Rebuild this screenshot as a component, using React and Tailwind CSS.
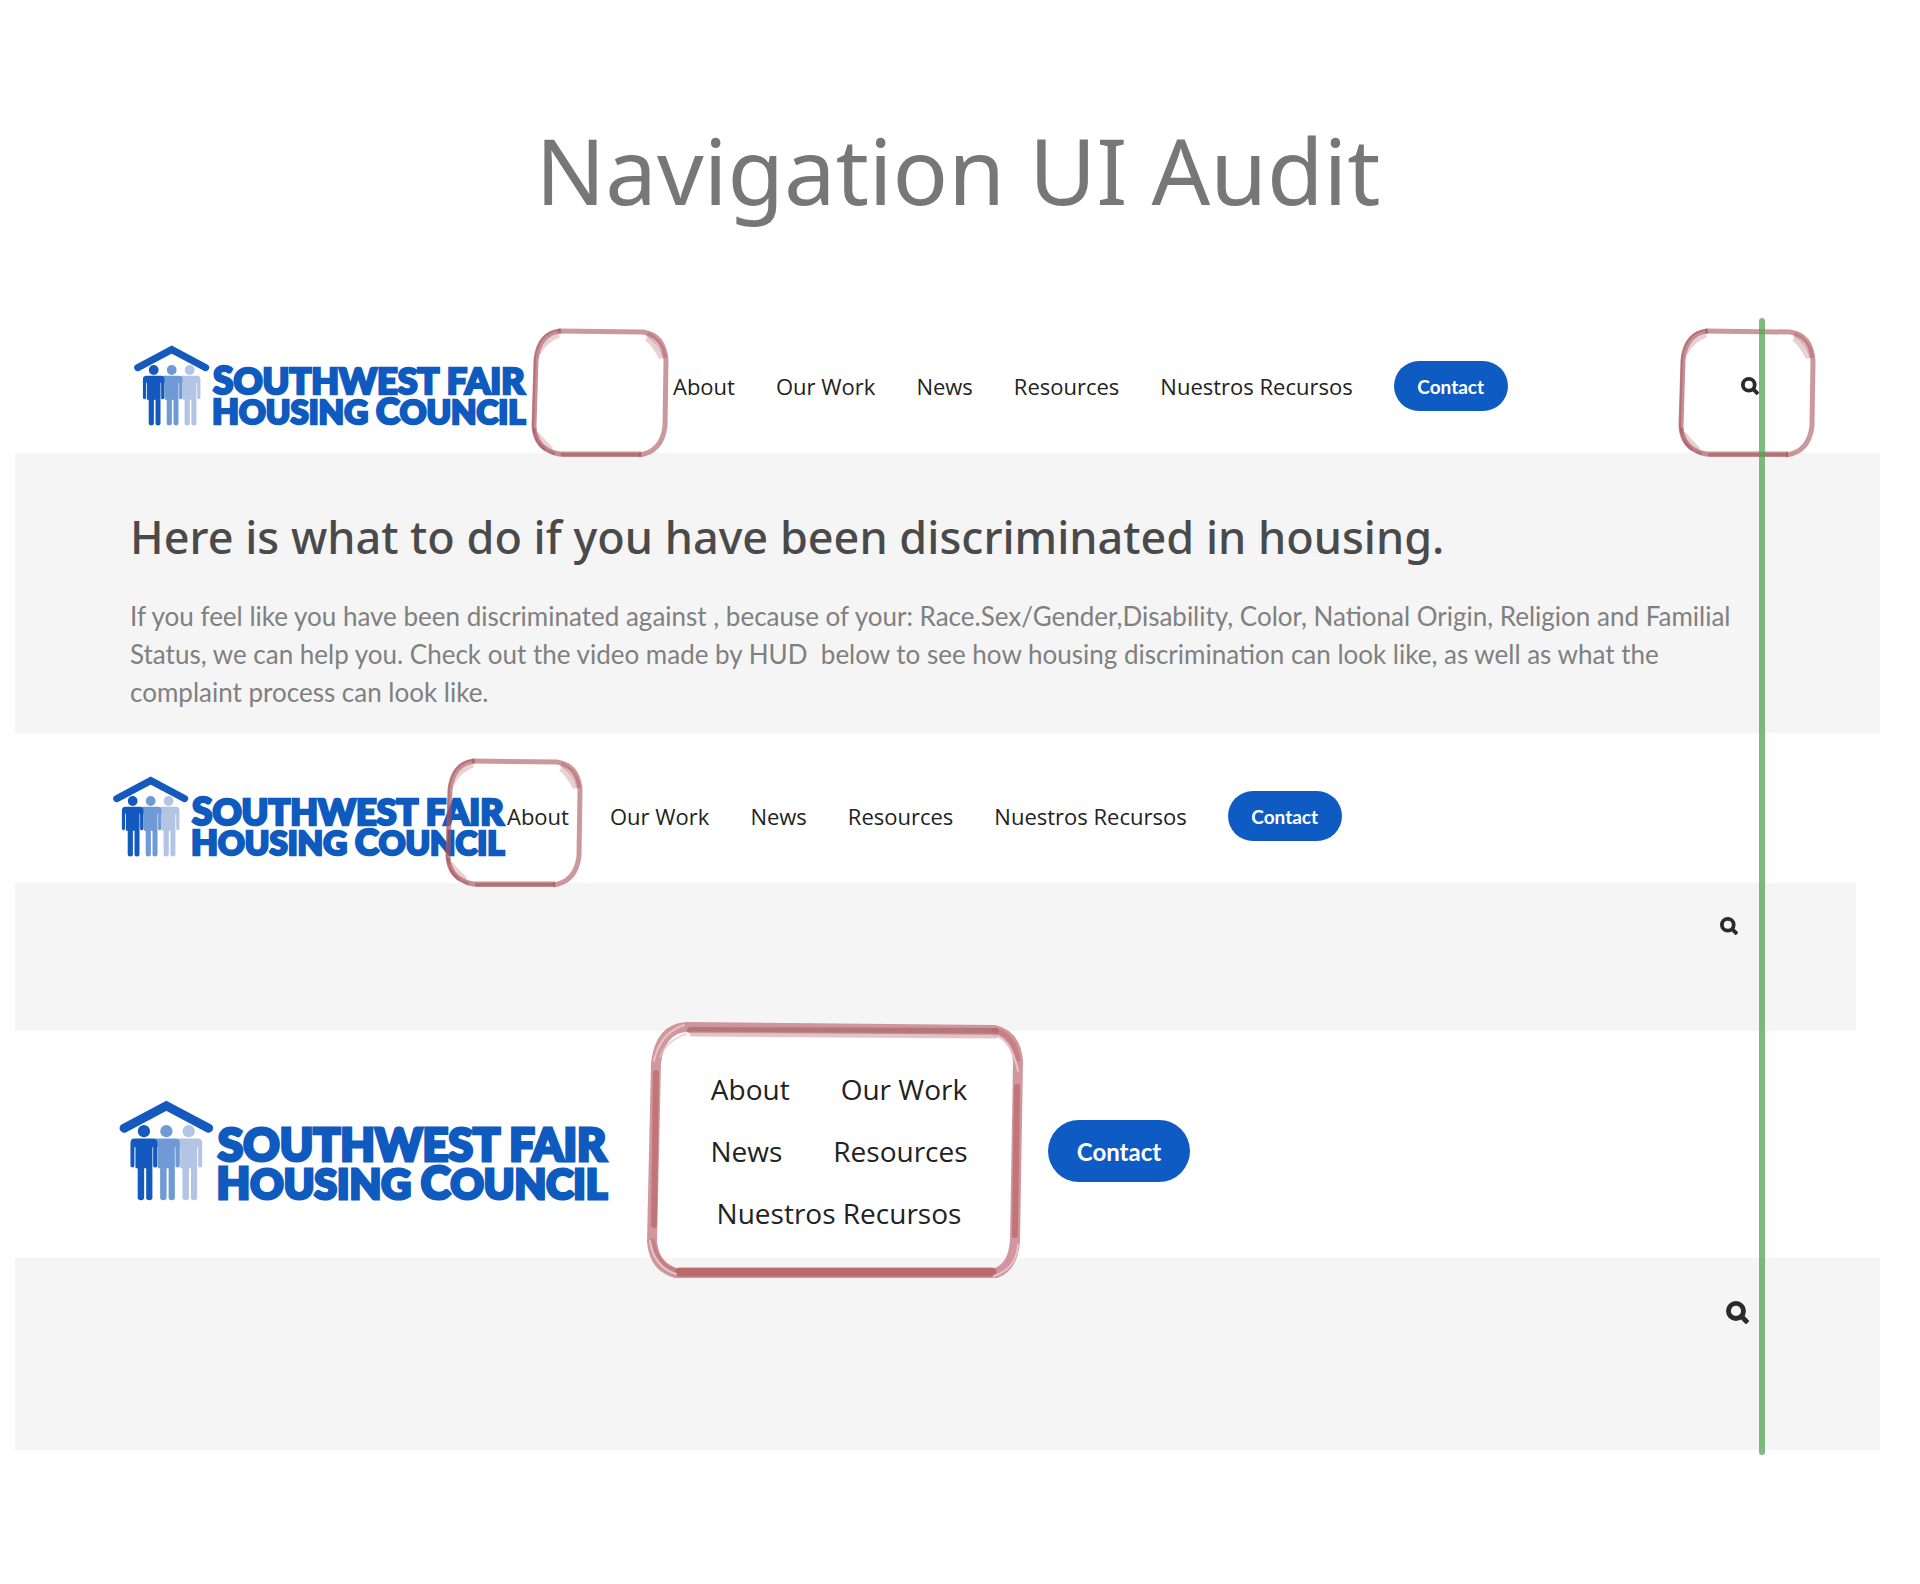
import React from "react";

const links = ["About", "Our Work", "News", "Resources", "Nuestros Recursos"];

// ✅ LOGO
const Person = ({ x, color }) => (
  <g fill={color} transform={`translate(${x} 0)`}>
    <circle cx="10.8" cy="25" r="4.9" />
    <path d="M3.4 30.8H18.2Q21.6 30.8 21.6 34.4V52.6Q21.6 54.2 20 54.2Q18.4 54.2 18.4 52.6V37.8H17.6V78.4Q17.6 80.4 15.2 80.4Q12.6 80.4 12.6 78.4V54.8H11V78.4Q11 80.4 8.4 80.4Q5.8 80.4 5.8 78.4V54.8H4V37.8H3.2V52.6Q3.2 54.2 1.6 54.2Q0 54.2 0 52.6V34.4Q0 30.8 3.4 30.8Z" />
  </g>
);

const Logo = ({ className }) => (
  <svg viewBox="0 0 394 81" className={className} role="img" aria-label="Southwest Fair Housing Council">
    <Person x={44.8} color="#b3c4e4" />
    <Person x={26.9} color="#6f9ad6" />
    <Person x={8.9} color="#1459bd" />
    <path d="M3.8 22.6L37.7 4.6L71.6 22.6" fill="none" stroke="#1459bd" strokeWidth="7.2" strokeLinecap="round" />
    <g
      fill="#0f5abf"
      stroke="#0f5abf"
      strokeWidth="2.6"
      fontFamily="Lato, sans-serif"
      fontWeight="900"
    >
      <text x="79" y="49" fontSize="36">
        <tspan fontSize="37">S</tspan>OUTHWEST FAIR
      </text>
      <text x="78" y="79" fontSize="33">
        <tspan fontSize="35">H</tspan>OUSING <tspan fontSize="36">C</tspan>OUNCIL
      </text>
    </g>
  </svg>
);

const SearchButton = ({ className }) => (
  <button type="button" aria-label="Search" className={className}>
    <svg viewBox="0 0 18 18" className="w-full h-full" fill="none" stroke="#2b2b2b">
      <circle cx="7.8" cy="7.8" r="5.9" strokeWidth="3.8" />
      <path d="M12.2 12.2L17 17" strokeWidth="3.8" />
    </svg>
  </button>
);

const NavLink = ({ label }) => (
  <a href="#" className="whitespace-nowrap text-[#222222]">{label}</a>
);

const NavBar = ({ className }) => (
  <nav className={`flex items-center gap-[41px] text-[22px] leading-8 ${className}`}>
    {links.map((label) => <NavLink key={label} label={label} />)}
    <a
      href="#"
      className="flex items-center justify-center w-[114px] h-[50px] pt-[2px] rounded-full bg-[#0e5bc4] text-white text-[19px] font-bold font-[Lato,sans-serif]"
    >
      Contact
    </a>
  </nav>
);

// ✅ HAND DRAWN MARKS
const SmallMark = ({ className }) => (
  <svg viewBox="0 0 138 130" className={`absolute w-[138px] h-[130px] pointer-events-none ${className}`} fill="none" aria-hidden="true">
    <g stroke="#a8545c">
      <path d="M27 3L112 4Q133 7 135 32L134 98Q131 124 108 127" strokeWidth="5" opacity="0.6" />
      <path d="M110 126H28Q4 121 3 98L5 32Q8 5 30 3" strokeWidth="5" opacity="0.65" />
      <path d="M28 2Q8 4 4 30L2 98Q4 116 14 122" strokeWidth="2" opacity="0.5" />
      <path d="M30 127H110" strokeWidth="4" opacity="0.5" />
      <path d="M24 126Q6 120 3 100" strokeWidth="3" opacity="0.5" />
      <path d="M116 6Q131 14 134 30" strokeWidth="5" opacity="0.35" />
    </g>
    <path d="M7 26Q14 12 28 7" stroke="#c98a96" strokeWidth="5" opacity="0.4" />
    <path d="M116 10Q124 16 131 30" stroke="#c98a96" strokeWidth="6" opacity="0.4" />
    <path d="M5 106Q12 114 20 122" stroke="#c98a96" strokeWidth="6" opacity="0.4" />
  </svg>
);

const LargeMark = ({ className }) => (
  <svg viewBox="0 0 380 264" className={`absolute w-[380px] h-[264px] pointer-events-none ${className}`} fill="none" aria-hidden="true">
    <g stroke="#c57d84" strokeWidth="10" strokeLinecap="round" strokeLinejoin="round">
      <path d="M346 254H30Q8 248 6 222L10 44Q14 10 40 8L348 11Q370 16 372 42L369 222Q367 248 350 254" opacity="0.8" />
    </g>
    <g stroke="#b4595a" strokeLinecap="round">
      <path d="M44 11L350 12" strokeWidth="6" stroke="#a06263" opacity="0.6" />
      <path d="M46 15L350 17" strokeWidth="5" stroke="#d49aa0" opacity="0.6" />
      <path d="M371 68L369 216" strokeWidth="6" opacity="0.55" />
      <path d="M346 253H34" strokeWidth="9" opacity="0.7" />
      <path d="M10 54L8 206" strokeWidth="6" opacity="0.55" />
      <path d="M348 11Q368 16 372 40" strokeWidth="5" opacity="0.35" />
      <path d="M30 252Q10 246 7 222" strokeWidth="5" opacity="0.35" />
    </g>
    <g stroke="#e6c3ca" strokeWidth="2" strokeLinecap="round">
      <path d="M4 222Q8 248 30 255" />
      <path d="M8 42Q14 14 38 6" />
      <path d="M348 257Q370 250 372 226" />
      <path d="M352 17Q366 24 372 52" />
      <path d="M14 38Q20 22 40 15" opacity="0.7" />
    </g>
  </svg>
);

const App = () => {
  return (
    <div className="bg-white overflow-x-hidden pb-[133px] font-['Open_Sans',sans-serif]">
      <h1 className="pt-[110px] pb-[88px] pr-1 text-center text-[92px] leading-[120px] text-[#777777] font-['Noto_Sans',sans-serif]">
        Navigation UI Audit
      </h1>

      <main className="relative ml-[15px] mr-10">

        {/* WIDE HEADER */}
        <section>
          <header className="relative flex items-center h-[135px] pl-[119px] pr-[121px]">
            <Logo className="w-[394px] h-[81px] shrink-0" />
            <NavBar className="ml-[145px]" />
            <SearchButton className="ml-auto w-[18px] h-[18px]" />
            <SmallMark className="left-[516px] top-[10px]" />
            <SmallMark className="right-[64px] top-[10px]" />
          </header>

          <div className="bg-[#f5f5f5] pl-[115px] pt-14 pb-[22px] pr-24">
            <h2 className="text-[45px] leading-[56px] font-medium text-[#4a4a4a] font-['Noto_Sans',sans-serif]">
              Here is what to do if you have been discriminated in housing.
            </h2>
            <p className="mt-8 text-[26px] leading-[38px] text-[#808080] font-[Lato,sans-serif]">
              If you feel like you have been discriminated against , because of your: Race.Sex/Gender,Disability, Color, National Origin, Religion and Familial
              <br />
              Status, we can help you. Check out the video made by HUD&nbsp; below to see how housing discrimination can look like, as well as what the
              <br />
              complaint process can look like.
            </p>
          </div>
        </section>

        {/* MEDIUM HEADER */}
        <section className="mr-6">
          <header className="relative flex items-center h-[150px] pt-4 pl-[98px]">
            <Logo className="w-[394px] h-[81px] shrink-0" />
            <NavBar className="" />
            <SmallMark className="left-[430px] top-[25px]" />
          </header>

          <div className="flex justify-end h-[148px] bg-[#f5f5f5] pt-[34px] pr-[118px]">
            <SearchButton className="w-[18px] h-[18px]" />
          </div>
        </section>

        {/* NARROW HEADER */}
        <section>
          <header className="relative flex items-center h-[227px] pt-3 pl-[104px]">
            <Logo className="w-[492px] h-[101px] shrink-0" />
            <nav className="flex flex-wrap justify-center gap-x-[51px] w-[280px] ml-[88px] text-[28px] leading-[62px]">
              {links.map((label) => <NavLink key={label} label={label} />)}
            </nav>
            <a
              href="#"
              className="flex items-center justify-center w-[142px] h-[62px] pt-[2px] ml-[69px] rounded-full bg-[#0e5bc4] text-white text-2xl font-bold font-[Lato,sans-serif]"
            >
              Contact
            </a>
            <LargeMark className="left-[631px] -top-[12px] z-10" />
          </header>

          <div className="flex justify-end h-[192px] bg-[#f5f5f5] pt-[43px] pr-[131px]">
            <SearchButton className="w-[23px] h-[23px]" />
          </div>
        </section>

        {/* ALIGNMENT GUIDE */}
        <div className="absolute top-0 -bottom-[5px] right-[115px] w-[6px] rounded-full bg-[#52a352]/75" />
      </main>
    </div>
  );
};

export default App;
